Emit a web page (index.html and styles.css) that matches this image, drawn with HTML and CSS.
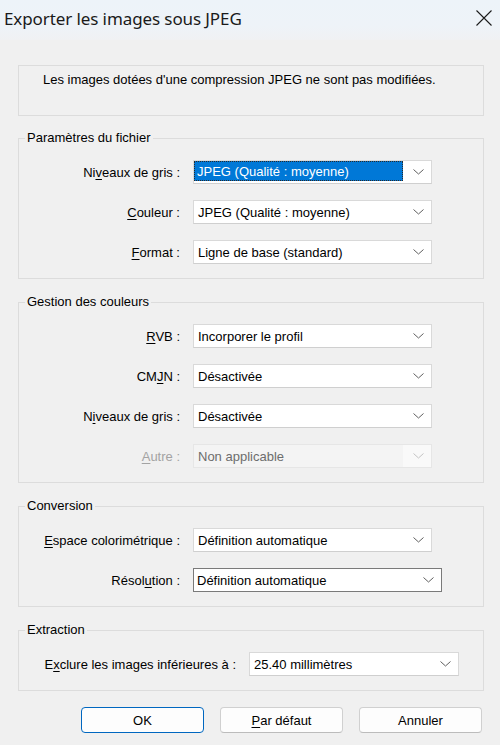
FILE: index.html
```html
<!DOCTYPE html>
<html lang="fr">
<head>
<meta charset="utf-8">
<title>Exporter les images sous JPEG</title>
<link rel="stylesheet" href="styles.css">
</head>
<body>
<div class="window">
  <header class="titlebar">
    <span class="title">Exporter les images sous JPEG</span>
    <svg class="close" width="16" height="16" viewBox="0 0 16 16"><path d="M0.5 0.5 L15.5 15.5 M15.5 0.5 L0.5 15.5" stroke="#1b1b1b" stroke-width="1.1" fill="none"/></svg>
  </header>
  <main class="content">
    <div class="info">Les images dotées d'une compression JPEG ne sont pas modifiées.</div>

    <fieldset class="group">
      <legend>Paramètres du fichier</legend>
      <div class="rows">
        <div class="row">
          <span class="label">Ni<u>v</u>eaux de gris :</span>
          <div class="combo">
            <span class="sel">JPEG (Qualité : moyenne)</span>
            <span class="arrow"><svg width="11" height="6" viewBox="0 0 11 6"><path d="M0.5 0.5 L5.5 5 L10.5 0.5" stroke="#5f5f5f" fill="none"/></svg></span>
          </div>
        </div>
        <div class="row">
          <span class="label"><u>C</u>ouleur :</span>
          <div class="combo">
            <span class="val">JPEG (Qualité : moyenne)</span>
            <span class="arrow"><svg width="11" height="6" viewBox="0 0 11 6"><path d="M0.5 0.5 L5.5 5 L10.5 0.5" stroke="#5f5f5f" fill="none"/></svg></span>
          </div>
        </div>
        <div class="row">
          <span class="label"><u>F</u>ormat :</span>
          <div class="combo">
            <span class="val">Ligne de base (standard)</span>
            <span class="arrow"><svg width="11" height="6" viewBox="0 0 11 6"><path d="M0.5 0.5 L5.5 5 L10.5 0.5" stroke="#5f5f5f" fill="none"/></svg></span>
          </div>
        </div>
      </div>
    </fieldset>

    <fieldset class="group">
      <legend>Gestion des couleurs</legend>
      <div class="rows">
        <div class="row">
          <span class="label"><u>R</u>VB :</span>
          <div class="combo">
            <span class="val">Incorporer le profil</span>
            <span class="arrow"><svg width="11" height="6" viewBox="0 0 11 6"><path d="M0.5 0.5 L5.5 5 L10.5 0.5" stroke="#5f5f5f" fill="none"/></svg></span>
          </div>
        </div>
        <div class="row">
          <span class="label">CM<u>J</u>N :</span>
          <div class="combo">
            <span class="val">Désactivée</span>
            <span class="arrow"><svg width="11" height="6" viewBox="0 0 11 6"><path d="M0.5 0.5 L5.5 5 L10.5 0.5" stroke="#5f5f5f" fill="none"/></svg></span>
          </div>
        </div>
        <div class="row">
          <span class="label">N<u>i</u>veaux de gris :</span>
          <div class="combo">
            <span class="val">Désactivée</span>
            <span class="arrow"><svg width="11" height="6" viewBox="0 0 11 6"><path d="M0.5 0.5 L5.5 5 L10.5 0.5" stroke="#5f5f5f" fill="none"/></svg></span>
          </div>
        </div>
        <div class="row">
          <span class="label disabled"><u>A</u>utre :</span>
          <div class="combo off">
            <span class="val">Non applicable</span>
            <span class="arrow"><svg width="11" height="6" viewBox="0 0 11 6"><path d="M0.5 0.5 L5.5 5 L10.5 0.5" stroke="#c4c4c4" fill="none"/></svg></span>
          </div>
        </div>
      </div>
    </fieldset>

    <fieldset class="group">
      <legend>Conversion</legend>
      <div class="rows">
        <div class="row">
          <span class="label"><u>E</u>space colorimétrique :</span>
          <div class="combo">
            <span class="val">Définition automatique</span>
            <span class="arrow"><svg width="11" height="6" viewBox="0 0 11 6"><path d="M0.5 0.5 L5.5 5 L10.5 0.5" stroke="#5f5f5f" fill="none"/></svg></span>
          </div>
        </div>
        <div class="row">
          <span class="label">Résol<u>u</u>tion :</span>
          <div class="combo wide">
            <span class="val">Définition automatique</span>
            <span class="arrow"><svg width="11" height="6" viewBox="0 0 11 6"><path d="M0.5 0.5 L5.5 5 L10.5 0.5" stroke="#5f5f5f" fill="none"/></svg></span>
          </div>
        </div>
      </div>
    </fieldset>

    <fieldset class="group">
      <legend>Extraction</legend>
      <div class="rows">
        <div class="row extract">
          <span class="label">E<u>x</u>clure les images inférieures à :</span>
          <div class="combo short">
            <span class="val">25.40 millimètres</span>
            <span class="arrow"><svg width="11" height="6" viewBox="0 0 11 6"><path d="M0.5 0.5 L5.5 5 L10.5 0.5" stroke="#5f5f5f" fill="none"/></svg></span>
          </div>
        </div>
      </div>
    </fieldset>

    <div class="buttons">
      <button class="btn default">OK</button>
      <button class="btn"><u>P</u>ar défaut</button>
      <button class="btn">Annuler</button>
    </div>
  </main>
</div>
</body>
</html>
```

FILE: styles.css
```css
html, body {
  margin: 0;
  padding: 0;
  background: #f0f0f0;
}
body {
  width: 500px;
  height: 745px;
  overflow: hidden;
  font-family: "Liberation Sans", Arial, sans-serif;
  font-size: 13px;
  color: #000;
}
.window {
  display: flex;
  flex-direction: column;
}
.titlebar {
  height: 40px;
  box-sizing: border-box;
  display: flex;
  align-items: center;
  justify-content: space-between;
  padding: 0 8px 4px 4px;
  background: linear-gradient(to bottom, #edf3f9 0%, #eef3f8 65%, #f0f1f3 100%);
}
.title {
  font-family: "Noto Sans", "Open Sans", sans-serif;
  font-size: 17px;
  color: #1a1a1a;
  letter-spacing: -0.1px;
}
.close {
  display: block;
}
.content {
  padding: 25px 16px 0 18px;
  display: flex;
  flex-direction: column;
}
.info {
  height: 51px;
  box-sizing: border-box;
  border: 1px solid #dcdcdc;
  padding: 6px 0 0 24px;
  line-height: 16px;
}
.group {
  margin: 15px 0 0 0;
  padding: 14px 0 14px 0;
  border: 1px solid #dcdcdc;
  min-width: 0;
}
.info + .group {
  margin-top: 14px;
}
.group legend {
  margin-left: 6px;
  padding: 0 2px;
  line-height: 16px;
  font-size: 13px;
}
.rows {
  display: flex;
  flex-direction: column;
  gap: 16px;
}
.row {
  display: grid;
  grid-template-columns: 161px auto;
  column-gap: 13px;
  align-items: center;
  justify-content: start;
}
.row.extract {
  grid-template-columns: 217px auto;
}
.label {
  text-align: right;
  white-space: nowrap;
  color: #000;
}
.label.disabled {
  color: #a3a3a3;
}
.combo {
  width: 239px;
  height: 24px;
  box-sizing: border-box;
  border: 1px solid #d9d9d9;
  border-bottom-color: #cfcfcf;
  background: #fff;
  display: flex;
  align-items: stretch;
}
.combo.wide {
  width: 249px;
  border-color: #7a7a7a;
}
.combo.short {
  width: 210px;
}
.combo.off {
  background: #f4f4f4;
  border-color: #e6e6e6;
}
.val {
  flex: 1;
  display: flex;
  align-items: center;
  padding-left: 4px;
  white-space: nowrap;
}
.combo.wide .val {
  padding-left: 3px;
}
.combo.off .val {
  color: #6d6d6d;
}
.sel {
  flex: 1;
  display: flex;
  align-items: center;
  padding-left: 3px;
  margin-bottom: 2px;
  background: #0078d7;
  color: #fff;
  outline: 1px dotted #2a2a2a;
  outline-offset: -1px;
  white-space: nowrap;
}
.arrow {
  width: 28px;
  flex: none;
  display: flex;
  align-items: center;
  justify-content: center;
}
.arrow svg {
  display: block;
  margin-left: 2px;
}
.combo.off .arrow {
  background: #f9f9f9;
}
.buttons {
  display: flex;
  justify-content: flex-end;
  gap: 16px;
  margin-top: 16px;
  padding-right: 2px;
}
.btn {
  width: 123px;
  height: 26px;
  box-sizing: border-box;
  border: 1px solid #d0d0d0;
  border-bottom-color: #bcbcbc;
  border-radius: 4px;
  background: #fdfdfd;
  font-family: "Liberation Sans", Arial, sans-serif;
  font-size: 13px;
  color: #000;
  padding: 0;
}
.btn.default {
  border: 1px solid #0067c0;
}
u {
  text-decoration-thickness: 1px;
  text-underline-offset: 2px;
}
```
